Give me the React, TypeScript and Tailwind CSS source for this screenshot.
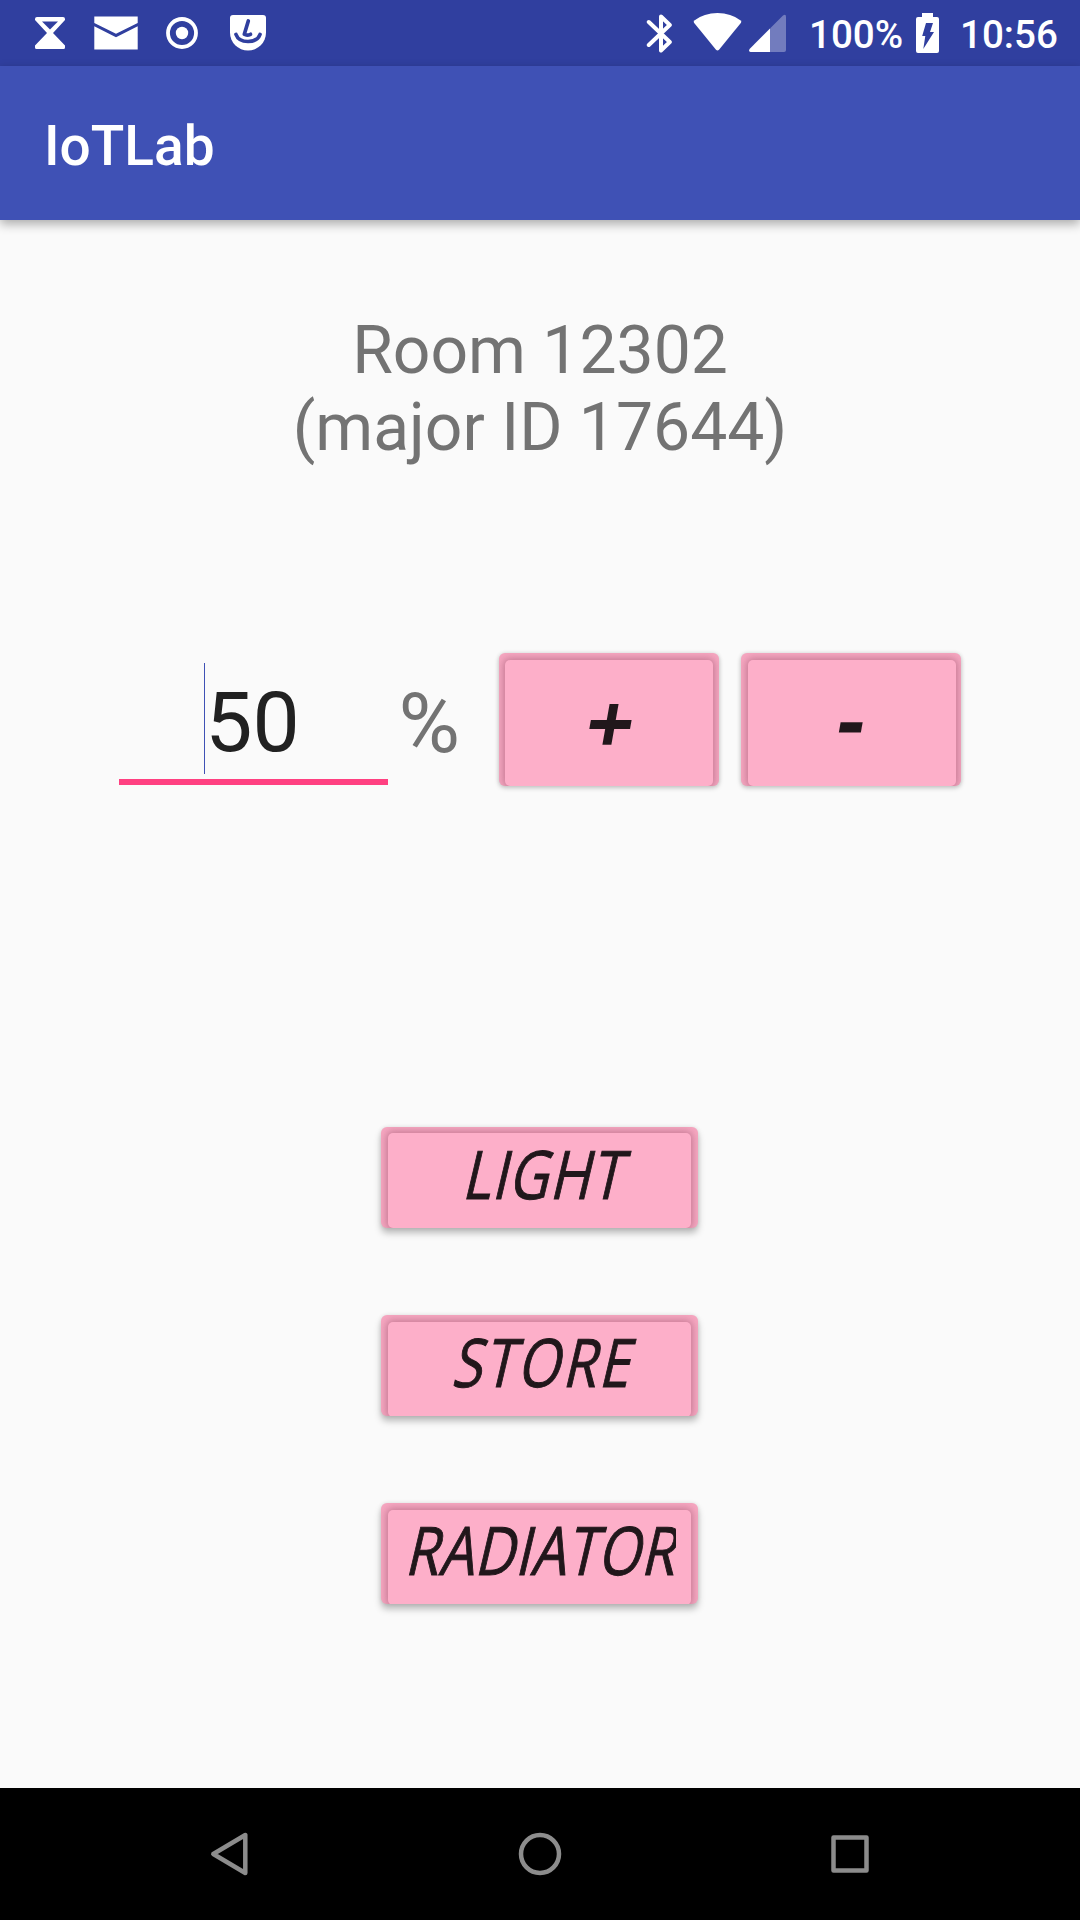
import type { ReactNode } from "react";

function Glyph({ box, className, children }: { box: string; className: string; children: ReactNode }) {
  return (
    <svg viewBox={box} className={`block shrink-0 ${className}`} fill="white">
      {children}
    </svg>
  );
}

function StatusBar() {
  return (
    <div className="flex h-[66px] items-start bg-[#303f9f] font-medium text-white">
      <Glyph box="34 0 32 66" className="ml-[34px] h-[66px] w-[32px]">
        <path fillRule="evenodd" d="M37 17H63Q65 17 65 19V20L53 33L65 45.500V47.500Q65 49 63.500 49H36.500Q35 49 35 47.500V45.500L47 33L35 20V19Q35 17 37 17ZM42 21.500L50 29.500L58 21.500Z" />
      </Glyph>
      <Glyph box="93 0 46 66" className="ml-[27px] h-[66px] w-[46px]">
        <path d="M94.300 16.500H137.700V23L116 33.700L94.300 23ZM94.300 26.300L116 37.200L137.700 26.300V49.500H94.300Z" />
      </Glyph>
      <Glyph box="165 0 34 66" className="ml-[26px] h-[66px] w-[34px]">
        <circle cx="182" cy="33" r="14" fill="none" stroke="white" strokeWidth="3.8" />
        <circle cx="182" cy="33" r="6.200" />
      </Glyph>
      <Glyph box="229 0 38 66" className="ml-[30px] h-[66px] w-[38px]">
        <path d="M233 15H263Q266 15 266 18V32.500A18 18 0 0 1 230 32.500V18Q230 15 233 15Z" />
        <path d="M248.300 21L244.300 34.300Q247 36 250.500 34.300" fill="none" stroke="#303f9f" strokeWidth="3.700" strokeLinecap="round" strokeLinejoin="round" />
        <path d="M236 34.500Q238.500 41.500 248 41.500Q257.500 41.500 260 34.500" fill="none" stroke="#303f9f" strokeWidth="3.700" strokeLinecap="round" />
      </Glyph>
      <Glyph box="646 0 28 66" className="ml-[379px] h-[66px] w-[28px]">
        <path d="M648.800 22L669.800 42L661 50.500V16.500L669.800 25L648.800 45" fill="none" stroke="white" strokeWidth="4" strokeLinejoin="round" strokeLinecap="round" />
      </Glyph>
      <Glyph box="693 0 50 66" className="ml-[19px] h-[66px] w-[50px]">
        <path d="M694.300 20.500Q704 13 717.500 13Q731 13 740.700 20.500Q741.800 21.500 741 22.800L719 49.700Q717.500 51.300 716 49.700L694 22.800Q693.200 21.500 694.300 20.500Z" />
      </Glyph>
      <Glyph box="748 0 39 66" className="ml-[5px] h-[66px] w-[39px]">
        <path fillOpacity="0.32" d="M770 28.500L783 15.500Q786 13.500 786 17V50Q786 52 784 52H770Z" />
        <path d="M770 28.500V52H750.500Q748 51.500 749.800 48.800Z" />
      </Glyph>
      <span className="ml-[22px] w-[95px] whitespace-nowrap text-[38.6px] leading-[69px]">100%</span>
      <Glyph box="915 0 25 66" className="ml-[11px] h-[66px] w-[25px]">
        <path d="M922 13H933V17H937Q939 17 939 19V51Q939 53 937 53H918Q916 53 916 51V19Q916 17 918 17H922Z" />
        <path fill="#303f9f" d="M926 23H933L930 32H934L923.300 49L925.300 36H922.200Z" />
      </Glyph>
      <span className="ml-[20px] whitespace-nowrap text-[38.6px] leading-[69px]">10:56</span>
    </div>
  );
}

function Raised({ className, face, children }: { className: string; face: string; children: ReactNode }) {
  return (
    <button
      type="button"
      className={`block overflow-hidden rounded-[6px] bg-[#f6a7c1] ${className}`}
    >
      <span className={`block rounded-[5px] bg-[#fdafc9] font-['Open_Sans',sans-serif] text-[#21171b] shadow-[0_0_7px_2px_rgba(120,50,75,0.36)] ${face}`}>
        {children}
      </span>
    </button>
  );
}

function StepButton({ label, edge, nudge }: { label: string; edge: string; nudge: string }) {
  return (
    <Raised
      className={`h-[133px] w-[220px] pt-[6px] shadow-[0_2px_5px_rgba(0,0,0,0.2),0_0_4px_rgba(0,0,0,0.1)] ${edge}`}
      face="h-[126px]"
    >
      <span className={`inline-block -skew-x-10 text-[84px] font-bold ${nudge}`}>{label}</span>
    </Raised>
  );
}

function ListButton({ label, edge, align, type }: { label: string; edge: string; align: string; type: string }) {
  return (
    <Raised
      className={`mr-px h-[101px] w-[317px] px-[7px] shadow-[0_5px_7px_rgba(0,0,0,0.26),0_0_4px_rgba(0,0,0,0.1)] ${edge}`}
      face="h-[95px] px-[17px]"
    >
      <span className={`flex h-[95px] w-[271px] overflow-x-clip text-[67px] ${align}`}>
        <span className={`shrink-0 scale-x-82 -skew-x-16 [-webkit-text-stroke:1px_#21171b] ${type}`}>{label}</span>
      </span>
    </Raised>
  );
}

export default function App() {
  return (
    <div className="flex h-[1920px] w-[1080px] flex-col overflow-hidden bg-[#fafafa] font-[Roboto,sans-serif]">
      <StatusBar />
      <header className="z-10 h-[154px] bg-[#3f51b5] pl-[44px] text-[55px] leading-[160px] font-medium text-white shadow-[0_4px_10px_rgba(0,0,0,0.32)]">
        IoTLab
      </header>
      <main className="flex flex-1 flex-col items-center">
        <h1 className="mt-[93px] text-center text-[66px] leading-[76.5px] text-[#737373]">
          Room 12302
          <br />
          (major ID 17644)
        </h1>
        <div className="mt-[187px] flex w-[842px] items-start">
          <div className="flex h-[132px] w-[269px] justify-center border-b-[6px] border-[#ff4081] pr-[3px]">
            <div className="mt-[10px] h-[111px] w-px bg-[#3f51b5]" />
            <span className="text-[84px] leading-[140px] text-[#212121]">50</span>
          </div>
          <span className="ml-[10.5px] w-[100.5px] text-[84px] leading-[141px] text-[#737373]">%</span>
          <StepButton label="+" edge="px-[6px]" nudge="ml-[4px] leading-[123px]" />
          <StepButton label="-" edge="ml-[22px] pr-[5px] pl-[7px]" nudge="ml-px leading-[115px]" />
        </div>
        <ListButton label="LIGHT" edge="mt-[333px] pt-[6px]" align="justify-center" type="ml-[10px] leading-[80px] tracking-[1.4px]" />
        <ListButton label="STORE" edge="mt-[87px] pt-[7px]" align="justify-center" type="ml-[8px] leading-[78px] tracking-[3.1px]" />
        <ListButton label="RADIATOR" edge="mt-[87px] pt-[7px]" align="justify-start" type="ml-[3px] origin-left leading-[78px] tracking-[0.8px]" />
      </main>
      <nav className="flex h-[132px] items-center bg-black">
        <svg viewBox="209 1788 41 132" className="ml-[209px] h-[132px] w-[41px]" fill="none" stroke="#8c8c8c" strokeWidth="4.500" strokeLinejoin="round">
          <path d="M245.300 1835V1873L213.300 1854Z" />
        </svg>
        <svg viewBox="517 1788 46 132" className="ml-[267px] h-[132px] w-[46px]" fill="none" stroke="#8c8c8c" strokeWidth="4.500">
          <circle cx="540" cy="1854" r="19" />
        </svg>
        <svg viewBox="829 1788 42 132" className="ml-[266px] h-[132px] w-[42px]" fill="none" stroke="#8c8c8c" strokeWidth="4.500" strokeLinejoin="round">
          <rect x="833.500" y="1837.500" width="33" height="33" />
        </svg>
      </nav>
    </div>
  );
}
